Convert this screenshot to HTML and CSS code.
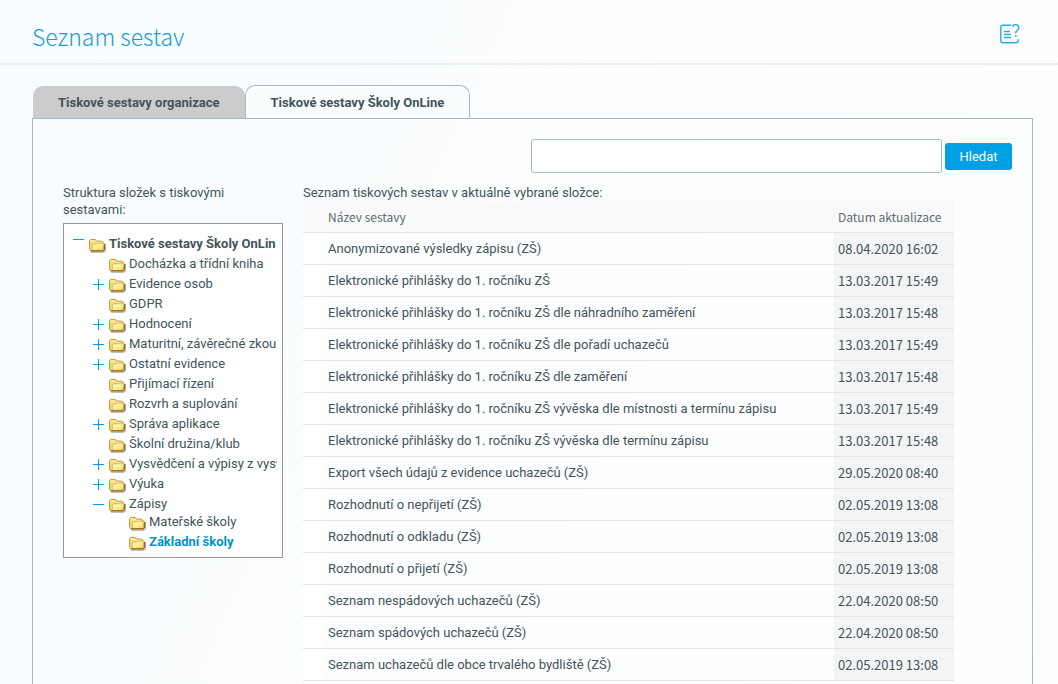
FILE: index.html
```html
<!DOCTYPE html>
<html lang="cs">
<head>
<meta charset="utf-8">
<meta name="viewport" content="width=device-width, initial-scale=1">
<title>Seznam sestav</title>
<link rel="stylesheet" href="styles.css">
</head>
<body>
<svg class="defs" aria-hidden="true">
  <defs>
    <linearGradient id="gold" x1="0" y1="0" x2="1" y2="1">
      <stop offset="0" stop-color="#fffbd0"/><stop offset=".6" stop-color="#ffeb8a"/><stop offset="1" stop-color="#f3c24c"/>
    </linearGradient>
    <symbol id="folder" viewBox="0 0 17 15">
      <path d="M2 14.1h12.6l1.8-1.4V6" fill="none" stroke="#555" stroke-opacity=".5" stroke-width="1.2"/>
      <path d="M.6 11.5V2.6L1.8 1.4h4.4l1.3 1.7h5.2l1 1.1v1.1h1.1l.7.8v5.6l-1.2 1.1H2z" fill="#fbdf78" stroke="#b98a2c" stroke-width=".9"/>
      <path d="M1.6 3h4.2l1.4 1.4h5.4" fill="none" stroke="#fff5bd"/>
      <path d="M3.2 12V6.8l1-.9h3l.9-.8h6.3l.6.6v5.9l-.9.9H3.5z" fill="url(#gold)" stroke="#c9962f" stroke-width=".7"/>
      <path d="M1.8 12.9h12.4l1.1-1.1V6.2" fill="none" stroke="#8a5a14"/>
    </symbol>
    <symbol id="plus" viewBox="0 0 11 11"><path d="M0 5.5h11M5.5 0v11" stroke="#00a0e3"/></symbol>
    <symbol id="minus" viewBox="0 0 11 11"><path d="M0 5.5h11" stroke="#00a0e3"/></symbol>
  </defs>
</svg>
<header class="page-header">
  <h1>Seznam sestav</h1>
  <button class="help" type="button" aria-label="Nápověda">
    <svg width="20" height="20" viewBox="0 0 20 20" fill="none" stroke="#24aee6" stroke-width="1.4">
      <path d="M11 1.2H3.2Q.8 1.2.8 3.6v12.8q0 2.4 2.4 2.4h12.6q2.4 0 2.4-2.4v-1.2"/>
      <path d="M4 7.5h6M4 10.5h7M4 13.5h7"/>
      <path d="M13.2 3V1.2q2.2-1 4-.2 1.8.8 1.5 2.8-.2 1.4-1.5 2.4-1.4 1-1.4 2.6v.7M15.8 11.2v1.8"/>
    </svg>
  </button>
</header>
<main>
  <nav class="tabs">
    <a class="tab" href="#organizace">Tiskové sestavy organizace</a>
    <a class="tab active" href="#skoly" aria-current="page">Tiskové sestavy Školy OnLine</a>
  </nav>
  <section class="panel">
    <form class="search">
      <input type="text" aria-label="Hledat sestavu">
      <button type="button">Hledat</button>
    </form>
    <div class="columns">
      <aside>
        <p>Struktura složek s tiskovými sestavami:</p>
        <div class="tree">
          <ul>
            <li class="root"><svg class="toggle"><use href="#minus"/></svg><svg class="folder"><use href="#folder"/></svg><a href="#t0">Tiskové sestavy Školy OnLin</a></li>
          </ul>
          <ul class="level1">
            <li><span class="toggle"></span><svg class="folder"><use href="#folder"/></svg><a href="#t1">Docházka a třídní kniha</a></li>
            <li><svg class="toggle"><use href="#plus"/></svg><svg class="folder"><use href="#folder"/></svg><a href="#t2">Evidence osob</a></li>
            <li><span class="toggle"></span><svg class="folder"><use href="#folder"/></svg><a href="#t3">GDPR</a></li>
            <li><svg class="toggle"><use href="#plus"/></svg><svg class="folder"><use href="#folder"/></svg><a href="#t4">Hodnocení</a></li>
            <li><svg class="toggle"><use href="#plus"/></svg><svg class="folder"><use href="#folder"/></svg><a href="#t5">Maturitní, závěrečné zkou</a></li>
            <li><svg class="toggle"><use href="#plus"/></svg><svg class="folder"><use href="#folder"/></svg><a href="#t6">Ostatní evidence</a></li>
            <li><span class="toggle"></span><svg class="folder"><use href="#folder"/></svg><a href="#t7">Přijímací řízení</a></li>
            <li><span class="toggle"></span><svg class="folder"><use href="#folder"/></svg><a href="#t8">Rozvrh a suplování</a></li>
            <li><svg class="toggle"><use href="#plus"/></svg><svg class="folder"><use href="#folder"/></svg><a href="#t9">Správa aplikace</a></li>
            <li><span class="toggle"></span><svg class="folder"><use href="#folder"/></svg><a href="#t10">Školní družina/klub</a></li>
            <li><svg class="toggle"><use href="#plus"/></svg><svg class="folder"><use href="#folder"/></svg><a href="#t11">Vysvědčení a výpisy z vysv</a></li>
            <li><svg class="toggle"><use href="#plus"/></svg><svg class="folder"><use href="#folder"/></svg><a href="#t12">Výuka</a></li>
            <li><svg class="toggle"><use href="#minus"/></svg><svg class="folder"><use href="#folder"/></svg><a href="#t13">Zápisy</a></li>
          </ul>
          <ul class="level2">
            <li><span class="toggle"></span><svg class="folder"><use href="#folder"/></svg><a href="#t14">Mateřské školy</a></li>
            <li class="selected"><span class="toggle"></span><svg class="folder"><use href="#folder"/></svg><a href="#t15">Základní školy</a></li>
          </ul>
        </div>
      </aside>
      <div class="reports">
        <p id="reports-label">Seznam tiskových sestav v aktuálně vybrané složce:</p>
        <table aria-labelledby="reports-label">
          <thead><tr><th class="mark"></th><th>Název sestavy</th><th class="date">Datum aktualizace</th></tr></thead>
          <tbody>
            <tr><td class="mark"></td><td>Anonymizované výsledky zápisu (ZŠ)</td><td class="date">08.04.2020 16:02</td></tr>
            <tr><td class="mark"></td><td>Elektronické přihlášky do 1. ročníku ZŠ</td><td class="date">13.03.2017 15:49</td></tr>
            <tr><td class="mark"></td><td>Elektronické přihlášky do 1. ročníku ZŠ dle náhradního zaměření</td><td class="date">13.03.2017 15:48</td></tr>
            <tr><td class="mark"></td><td>Elektronické přihlášky do 1. ročníku ZŠ dle pořadí uchazečů</td><td class="date">13.03.2017 15:49</td></tr>
            <tr><td class="mark"></td><td>Elektronické přihlášky do 1. ročníku ZŠ dle zaměření</td><td class="date">13.03.2017 15:48</td></tr>
            <tr><td class="mark"></td><td>Elektronické přihlášky do 1. ročníku ZŠ vývěska dle místnosti a termínu zápisu</td><td class="date">13.03.2017 15:49</td></tr>
            <tr><td class="mark"></td><td>Elektronické přihlášky do 1. ročníku ZŠ vývěska dle termínu zápisu</td><td class="date">13.03.2017 15:48</td></tr>
            <tr><td class="mark"></td><td>Export všech údajů z evidence uchazečů (ZŠ)</td><td class="date">29.05.2020 08:40</td></tr>
            <tr><td class="mark"></td><td>Rozhodnutí o nepřijetí (ZŠ)</td><td class="date">02.05.2019 13:08</td></tr>
            <tr><td class="mark"></td><td>Rozhodnutí o odkladu (ZŠ)</td><td class="date">02.05.2019 13:08</td></tr>
            <tr><td class="mark"></td><td>Rozhodnutí o přijetí (ZŠ)</td><td class="date">02.05.2019 13:08</td></tr>
            <tr><td class="mark"></td><td>Seznam nespádových uchazečů (ZŠ)</td><td class="date">22.04.2020 08:50</td></tr>
            <tr><td class="mark"></td><td>Seznam spádových uchazečů (ZŠ)</td><td class="date">22.04.2020 08:50</td></tr>
            <tr><td class="mark"></td><td>Seznam uchazečů dle obce trvalého bydliště (ZŠ)</td><td class="date">02.05.2019 13:08</td></tr>
          </tbody>
        </table>
      </div>
    </div>
  </section>
</main>
</body>
</html>
```
FILE: styles.css
```css
* { box-sizing: border-box; }
html { height: 100%; overflow: hidden; }
body {
  margin: 0;
  min-height: 100%;
  display: flex;
  flex-direction: column;
  background: linear-gradient(115deg, #f7fcff 0%, #fbfdfe 45%, #fdfefe 100%);
  color: #43545b;
  font: 13px/17px Roboto, "Noto Sans", sans-serif;
}
.defs { position: absolute; width: 0; height: 0; }
a { color: inherit; text-decoration: none; }
p, ul { margin: 0; padding: 0; }
.page-header {
  display: flex;
  align-items: center;
  justify-content: space-between;
  height: 65px;
  padding: 4px 38px 0 32px;
  border-bottom: 2px solid #e9edef;
}
h1 {
  margin: 0;
  padding-top: 4px;
  color: #1a9cd3;
  font: 300 23px/32px "Noto Sans CJK SC", "Noto Sans", sans-serif;
}
.help { width: 20px; height: 20px; padding: 0; border: 0; background: none; }
.help svg { display: block; }
main { flex: 1; display: flex; flex-direction: column; padding: 20px 25px 0 32px; }
.tabs { display: flex; align-items: flex-end; margin-bottom: -1px; }
.tab {
  height: 33px;
  margin-left: 1px;
  padding: 0 25px;
  border-bottom: 1px solid #a5a29d;
  border-radius: 10px 10px 0 0;
  background: #ccc;
  font-weight: 700;
  line-height: 33px;
}
.tab.active {
  height: 34px;
  margin-left: 0;
  border: 1px solid #a9b9c0;
  border-bottom: 0;
  background: #fafdfe;
}
.panel { flex: 1; border: 1px solid #a9b9c0; border-bottom: 0; padding: 20px 20px 0 30px; }
.search { display: flex; justify-content: flex-end; align-items: center; gap: 3px; }
.search input {
  flex: 0 1 411px;
  min-width: 0;
  height: 34px;
  border: 1px solid #a9b9c0;
  border-radius: 3px;
  background: #fff;
  font: inherit;
}
.search button {
  min-width: 67px;
  height: 27px;
  padding: 0 14px;
  border: 0;
  border-radius: 3px;
  background: #00a1e4;
  color: #fff;
  font: 13px/27px Roboto, sans-serif;
}
.columns { display: grid; grid-template-columns: 220px minmax(0, 651px); gap: 20px; padding-top: 11px; }
aside p { margin-bottom: 5px; }
.tree { padding: 10px 5px 5px 8px; border: 1px solid #999; background: #fff; }
.tree ul { list-style: none; overflow: hidden; }
.tree li { display: flex; align-items: center; height: 20px; white-space: nowrap; line-height: 20px; }
.tree .level1 { padding-left: 20px; }
.tree .level2 { margin-top: -2px; padding-left: 40px; }
.toggle { flex: none; width: 11px; height: 11px; margin: 0 5px 0 1px; }
.folder { flex: none; width: 17px; height: 15px; margin: 3px 3px 0 0; }
.root { font-weight: 700; }
.root .toggle { align-self: flex-start; }
.selected { color: #0092ca; font-weight: 700; }
table { width: 100%; border-collapse: collapse; table-layout: fixed; }
th, td { height: 32px; padding: 1px 0 0; border-bottom: 1px solid #e2e4e5; text-align: left; }
td { background: rgba(255, 255, 255, .3); }
th {
  height: 31px;
  padding-top: 0;
  background: #f9f9f9;
  color: #5b6b72;
  font: 12px/17px "Noto Sans CJK SC", "Noto Sans", sans-serif;
}
td:nth-child(2), th:nth-child(2) { padding-left: 3px; }
.mark { width: 22px; }
td.mark { background: #fff; }
.date { width: 120px; padding-left: 4px; }
td.date { background: #f3f5f5; font-family: "Noto Sans CJK SC", "Noto Sans", sans-serif; }
```
